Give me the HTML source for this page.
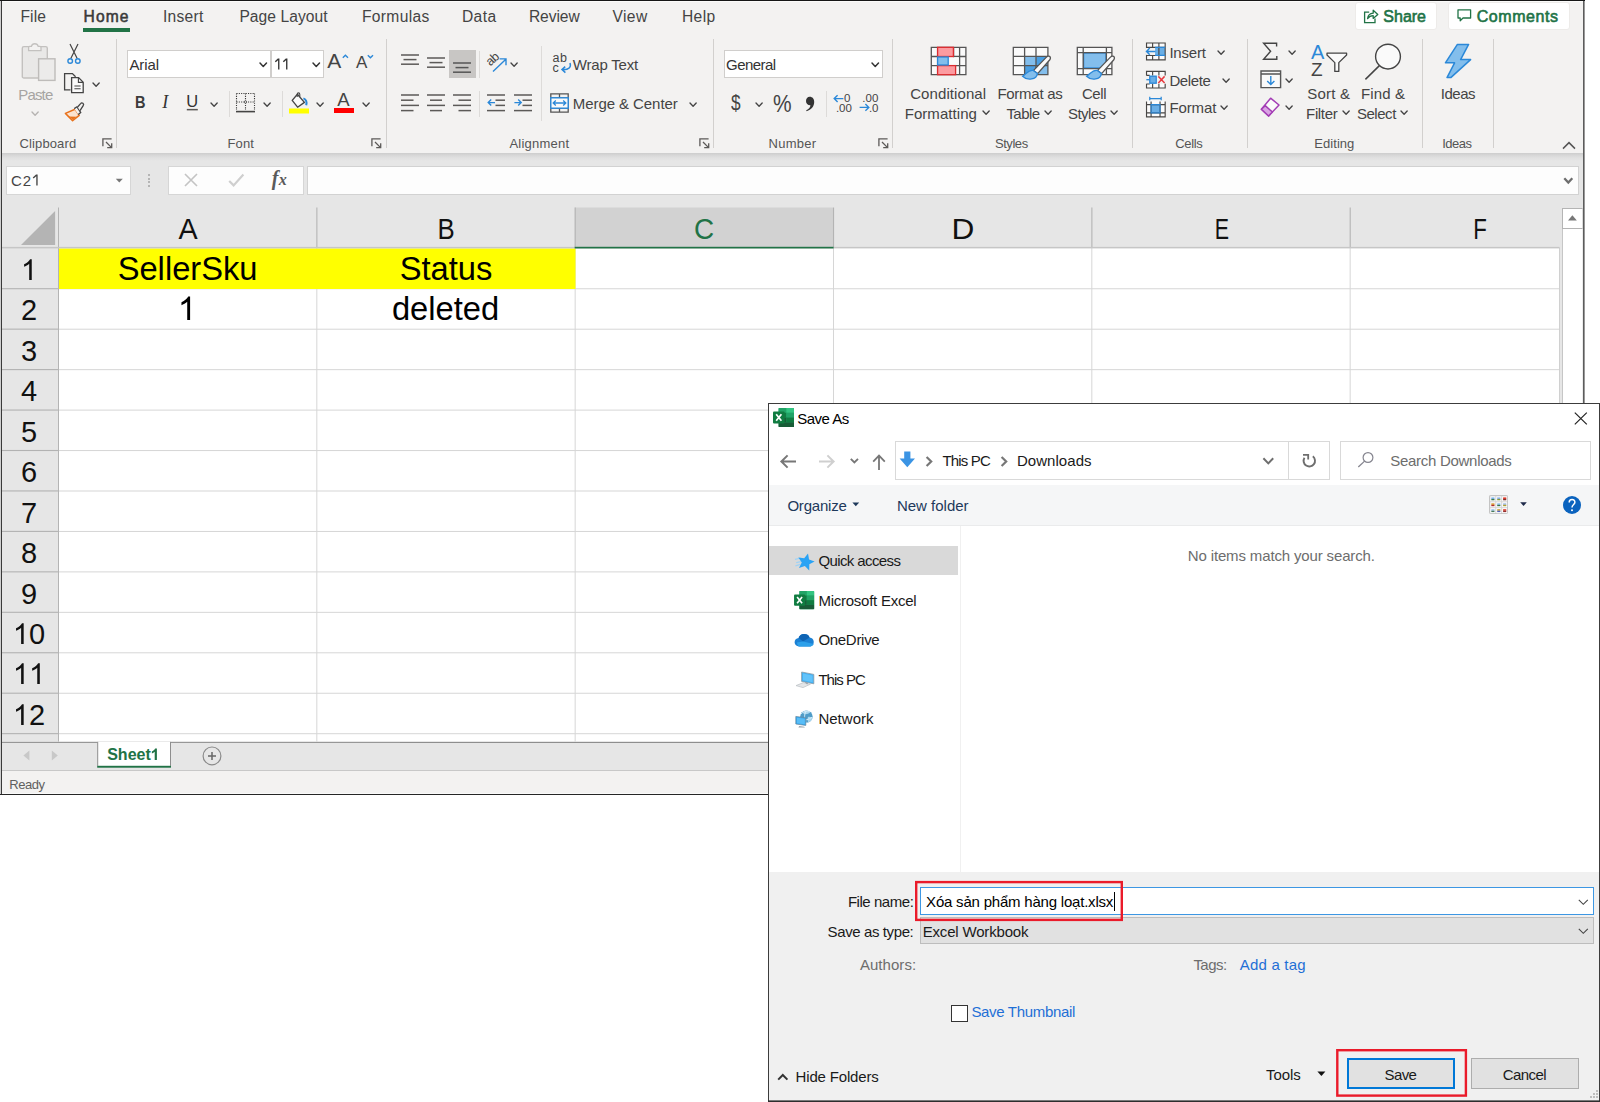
<!DOCTYPE html>
<html><head><meta charset="utf-8"><title>Save As</title>
<style>
html,body{margin:0;padding:0;}
body{width:1600px;height:1102px;position:relative;overflow:hidden;background:#fff;font-family:"Liberation Sans", sans-serif;}
div,svg{position:absolute;box-sizing:border-box;}
svg{overflow:visible;}
.t{white-space:pre;}
</style></head><body>
<div style="left:0px;top:0px;width:1585px;height:795px;background:#fff;"></div>
<div style="left:2px;top:1px;width:1581px;height:152px;background:#f3f2f1;"></div>
<div style="left:2px;top:153px;width:1581px;height:589px;background:#e6e6e6;"></div>
<div style="left:2px;top:153px;width:1581px;height:8px;background:linear-gradient(#cdcdcd,#d6d6d6 25%,#e0e0e0 60%,#e6e6e6);"></div>
<div style="left:2px;top:742px;width:1581px;height:28px;background:#e6e6e6;"></div>
<div style="left:2px;top:771px;width:1581px;height:22px;background:#f3f2f1;"></div>
<div style="left:2px;top:770px;width:1581px;height:1px;background:#c8c8c8;"></div>
<div id="t1" class="t" style="left:20.38px;top:8px;font-size:15.6px;line-height:17px;color:#444;font-weight:400;white-space:pre;letter-spacing:0.152px;">File</div>
<div id="t2" class="t" style="left:83.58px;top:8px;font-size:15.6px;line-height:17px;color:#3a3a3a;font-weight:400;white-space:pre;letter-spacing:1.110px;-webkit-text-stroke:0.55px #3a3a3a;">Home</div>
<div id="t3" class="t" style="left:162.88px;top:8px;font-size:15.6px;line-height:17px;color:#444;font-weight:400;white-space:pre;letter-spacing:0.291px;">Insert</div>
<div id="t4" class="t" style="left:239.38px;top:8px;font-size:15.6px;line-height:17px;color:#444;font-weight:400;white-space:pre;letter-spacing:0.061px;">Page Layout</div>
<div id="t5" class="t" style="left:361.88px;top:8px;font-size:15.6px;line-height:17px;color:#444;font-weight:400;white-space:pre;letter-spacing:0.344px;">Formulas</div>
<div id="t6" class="t" style="left:461.88px;top:8px;font-size:15.6px;line-height:17px;color:#444;font-weight:400;white-space:pre;letter-spacing:0.449px;">Data</div>
<div id="t7" class="t" style="left:528.88px;top:8px;font-size:15.6px;line-height:17px;color:#444;font-weight:400;white-space:pre;letter-spacing:-0.065px;">Review</div>
<div id="t8" class="t" style="left:612.38px;top:8px;font-size:15.6px;line-height:17px;color:#444;font-weight:400;white-space:pre;letter-spacing:0.429px;">View</div>
<div id="t9" class="t" style="left:681.88px;top:8px;font-size:15.6px;line-height:17px;color:#444;font-weight:400;white-space:pre;letter-spacing:0.417px;">Help</div>
<div style="left:83px;top:28px;width:47px;height:4px;background:#217346;"></div>
<div style="left:1355px;top:2px;width:82px;height:28px;background:#fff;border:1px solid #edebe9;border-radius:3px;"></div>
<div style="left:1448px;top:2px;width:122px;height:28px;background:#fff;border:1px solid #edebe9;border-radius:3px;"></div>
<div id="t10" class="t" style="left:1383.36px;top:8px;font-size:16px;line-height:17px;color:#217346;font-weight:400;white-space:pre;letter-spacing:-0.025px;-webkit-text-stroke:0.6px #217346;">Share</div>
<div id="t11" class="t" style="left:1476.66px;top:8px;font-size:16px;line-height:17px;color:#217346;font-weight:400;white-space:pre;letter-spacing:0.578px;-webkit-text-stroke:0.6px #217346;">Comments</div>
<svg style="left:1363px;top:8px;" width="16" height="16" viewBox="0 0 16 16"><path d="M6.2 4.2 H1.6 V14.6 H12 V10.6" fill="none" stroke="#217346" stroke-width="1.3"/><path d="M4.6 10.6 C5 7.2 7.4 5.4 10.2 5.2 V2.2 L14.8 6.4 L10.2 10.4 V7.6 C8 7.6 6 8.6 4.6 10.6 Z" fill="none" stroke="#217346" stroke-width="1.3" stroke-linejoin="round"/></svg>
<svg style="left:1457px;top:9px;" width="15" height="13" viewBox="0 0 15 13"><path d="M1 0.8 H13.6 V9 H6 L3.2 11.8 V9 H1 Z" fill="none" stroke="#217346" stroke-width="1.3" stroke-linejoin="round"/></svg>
<div style="left:6px;top:166px;width:125px;height:29px;background:#fdfdfd;border:1px solid #d6d6d6;"></div>
<div id="t12" class="t" style="left:10.90px;top:172px;font-size:15px;line-height:17px;color:#444;font-weight:400;white-space:pre;letter-spacing:1.006px;">C2</div>
<svg style="left:32.4px;top:174.4px;" width="7" height="13" viewBox="0 0 7 13"><path d="M1.2 4 L4.3 1.2 H4.95 V11.6" fill="none" stroke="#444" stroke-width="1.35"/></svg>
<svg style="left:115px;top:178px;" width="9" height="6" viewBox="0 0 9 6"><path d="M0.8 0.8 H7.8 L4.3 4.6 Z" fill="#777"/></svg>
<div style="left:148px;top:174.0px;width:2px;height:2px;background:#b5b5b5;"></div>
<div style="left:148px;top:177.6px;width:2px;height:2px;background:#b5b5b5;"></div>
<div style="left:148px;top:181.2px;width:2px;height:2px;background:#b5b5b5;"></div>
<div style="left:148px;top:184.8px;width:2px;height:2px;background:#b5b5b5;"></div>
<div style="left:168px;top:166px;width:136px;height:29px;background:#fdfdfd;border:1px solid #d6d6d6;"></div>
<svg style="left:184px;top:173px;" width="14" height="14" viewBox="0 0 14 14"><path d="M1 1 L13 13 M13 1 L1 13" stroke="#c4c4c4" stroke-width="1.6" fill="none"/></svg>
<svg style="left:228px;top:173px;" width="17" height="14" viewBox="0 0 17 14"><path d="M1.2 8 L5.6 12.4 L15.4 1.6" stroke="#cfcfcf" stroke-width="2.2" fill="none"/></svg>
<div id="t13" class="t" style="left:271.70px;top:167px;font-size:20px;line-height:22px;color:#5a5a5a;font-weight:700;white-space:pre;font-style:italic;font-family:'Liberation Serif', serif;">f</div>
<div id="t14" class="t" style="left:278.86px;top:171px;font-size:16px;line-height:17px;color:#5a5a5a;font-weight:700;white-space:pre;font-style:italic;font-family:'Liberation Serif', serif;">x</div>
<div style="left:307px;top:166px;width:1272px;height:29px;background:#fdfdfd;border:1px solid #d2d2d2;"></div>
<svg style="left:1563px;top:177.4px;" width="11" height="8" viewBox="0 0 11 8"><path d="M1.3 1.3 L5.3 5.5 L9.3 1.3" stroke="#6e6e6e" stroke-width="2.3" fill="none"/></svg>
<svg style="left:0px;top:0px;" width="1600" height="800" viewBox="0 0 1600 800"><rect x="59" y="248" width="1500.6" height="493.5" fill="#fff"/><rect x="574.66" y="207.5" width="258.33" height="40" fill="#d2d2d2"/><rect x="316.33" y="248" width="1" height="493.5" fill="#d6d6d6"/><rect x="574.66" y="248" width="1" height="493.5" fill="#d6d6d6"/><rect x="832.99" y="248" width="1" height="493.5" fill="#d6d6d6"/><rect x="1091.32" y="248" width="1" height="493.5" fill="#d6d6d6"/><rect x="1349.65" y="248" width="1" height="493.5" fill="#d6d6d6"/><rect x="59" y="288.25" width="1500.6" height="1" fill="#d6d6d6"/><rect x="59" y="328.70" width="1500.6" height="1" fill="#d6d6d6"/><rect x="59" y="369.15" width="1500.6" height="1" fill="#d6d6d6"/><rect x="59" y="409.60" width="1500.6" height="1" fill="#d6d6d6"/><rect x="59" y="450.05" width="1500.6" height="1" fill="#d6d6d6"/><rect x="59" y="490.50" width="1500.6" height="1" fill="#d6d6d6"/><rect x="59" y="530.95" width="1500.6" height="1" fill="#d6d6d6"/><rect x="59" y="571.40" width="1500.6" height="1" fill="#d6d6d6"/><rect x="59" y="611.85" width="1500.6" height="1" fill="#d6d6d6"/><rect x="59" y="652.30" width="1500.6" height="1" fill="#d6d6d6"/><rect x="59" y="692.75" width="1500.6" height="1" fill="#d6d6d6"/><rect x="59" y="733.20" width="1500.6" height="1" fill="#d6d6d6"/><rect x="1559.00" y="248" width="1" height="493.5" fill="#d0d0d0"/><rect x="59" y="248.4" width="516.5" height="40.6" fill="#ffff00"/><rect x="316.33" y="207.5" width="1.1" height="40" fill="#b4b4b4"/><rect x="574.66" y="207.5" width="1.1" height="40" fill="#b4b4b4"/><rect x="832.99" y="207.5" width="1.1" height="40" fill="#b4b4b4"/><rect x="1091.32" y="207.5" width="1.1" height="40" fill="#b4b4b4"/><rect x="1349.65" y="207.5" width="1.1" height="40" fill="#b4b4b4"/><rect x="58" y="207.5" width="1" height="534.0" fill="#b4b4b4"/><rect x="2" y="288.15" width="56" height="1.1" fill="#b2b2b2"/><rect x="2" y="328.60" width="56" height="1.1" fill="#b2b2b2"/><rect x="2" y="369.05" width="56" height="1.1" fill="#b2b2b2"/><rect x="2" y="409.50" width="56" height="1.1" fill="#b2b2b2"/><rect x="2" y="449.95" width="56" height="1.1" fill="#b2b2b2"/><rect x="2" y="490.40" width="56" height="1.1" fill="#b2b2b2"/><rect x="2" y="530.85" width="56" height="1.1" fill="#b2b2b2"/><rect x="2" y="571.30" width="56" height="1.1" fill="#b2b2b2"/><rect x="2" y="611.75" width="56" height="1.1" fill="#b2b2b2"/><rect x="2" y="652.20" width="56" height="1.1" fill="#b2b2b2"/><rect x="2" y="692.65" width="56" height="1.1" fill="#b2b2b2"/><rect x="2" y="733.10" width="56" height="1.1" fill="#b2b2b2"/><rect x="2" y="246.9" width="1557.6" height="1.5" fill="#c6c6c6"/><rect x="574.66" y="246.8" width="258.93" height="1.65" fill="#217346"/><path d="M55.1 210.9 V244.9 H21 Z" fill="#b4b4b4"/></svg>
<div class="t" style="left:128.00px;top:212px;width:120px;text-align:center;font-size:29.3px;line-height:33px;color:#111;font-weight:400;transform:scaleX(0.98);transform-origin:50% 50%;">A</div>
<div class="t" style="left:385.90px;top:212px;width:120px;text-align:center;font-size:29.3px;line-height:33px;color:#111;font-weight:400;transform:scaleX(0.88);transform-origin:50% 50%;">B</div>
<div class="t" style="left:644.40px;top:212px;width:120px;text-align:center;font-size:29.3px;line-height:33px;color:#217346;font-weight:400;transform:scaleX(0.95);transform-origin:50% 50%;">C</div>
<div class="t" style="left:903.10px;top:212px;width:120px;text-align:center;font-size:29.3px;line-height:33px;color:#111;font-weight:400;transform:scaleX(1.08);transform-origin:50% 50%;">D</div>
<div class="t" style="left:1161.80px;top:212px;width:120px;text-align:center;font-size:29.3px;line-height:33px;color:#111;font-weight:400;transform:scaleX(0.73);transform-origin:50% 50%;">E</div>
<div class="t" style="left:1420.20px;top:212px;width:120px;text-align:center;font-size:29.3px;line-height:33px;color:#111;font-weight:400;transform:scaleX(0.76);transform-origin:50% 50%;">F</div>
<svg style="left:0px;top:0px;" width="1600" height="1102" viewBox="0 0 1600 1102"><path transform="translate(20.94 280) scale(0.01416 -0.01416)" d="M763 0H583V1147Q518 1085 412.5 1023Q307 961 223 930V1104Q374 1175 487 1276Q600 1377 647 1472H763Z" fill="#111"/></svg>
<div class="t" style="left:20.94px;top:294px;font-size:29px;line-height:32px;color:#111;">2</div>
<div class="t" style="left:20.94px;top:335px;font-size:29px;line-height:32px;color:#111;">3</div>
<div class="t" style="left:20.94px;top:375px;font-size:29px;line-height:32px;color:#111;">4</div>
<div class="t" style="left:20.94px;top:416px;font-size:29px;line-height:32px;color:#111;">5</div>
<div class="t" style="left:20.94px;top:456px;font-size:29px;line-height:32px;color:#111;">6</div>
<div class="t" style="left:20.94px;top:497px;font-size:29px;line-height:32px;color:#111;">7</div>
<div class="t" style="left:20.94px;top:537px;font-size:29px;line-height:32px;color:#111;">8</div>
<div class="t" style="left:20.94px;top:578px;font-size:29px;line-height:32px;color:#111;">9</div>
<svg style="left:0px;top:0px;" width="1600" height="1102" viewBox="0 0 1600 1102"><path transform="translate(12.87 644) scale(0.01416 -0.01416)" d="M763 0H583V1147Q518 1085 412.5 1023Q307 961 223 930V1104Q374 1175 487 1276Q600 1377 647 1472H763Z" fill="#111"/></svg>
<div class="t" style="left:29.00px;top:618px;font-size:29px;line-height:32px;color:#111;">0</div>
<svg style="left:0px;top:0px;" width="1600" height="1102" viewBox="0 0 1600 1102"><path transform="translate(12.87 684) scale(0.01416 -0.01416)" d="M763 0H583V1147Q518 1085 412.5 1023Q307 961 223 930V1104Q374 1175 487 1276Q600 1377 647 1472H763Z" fill="#111"/></svg>
<svg style="left:0px;top:0px;" width="1600" height="1102" viewBox="0 0 1600 1102"><path transform="translate(29.00 684) scale(0.01416 -0.01416)" d="M763 0H583V1147Q518 1085 412.5 1023Q307 961 223 930V1104Q374 1175 487 1276Q600 1377 647 1472H763Z" fill="#111"/></svg>
<svg style="left:0px;top:0px;" width="1600" height="1102" viewBox="0 0 1600 1102"><path transform="translate(12.87 725) scale(0.01416 -0.01416)" d="M763 0H583V1147Q518 1085 412.5 1023Q307 961 223 930V1104Q374 1175 487 1276Q600 1377 647 1472H763Z" fill="#111"/></svg>
<div class="t" style="left:29.00px;top:699px;font-size:29px;line-height:32px;color:#111;">2</div>
<div class="t" style="left:58.60px;top:250px;width:258px;text-align:center;font-size:32.7px;line-height:37px;color:#000;font-weight:400;">SellerSku</div>
<div class="t" style="left:317.00px;top:250px;width:258px;text-align:center;font-size:32.7px;line-height:37px;color:#000;font-weight:400;">Status</div>
<svg style="left:0px;top:0px;" width="1600" height="1102" viewBox="0 0 1600 1102"><path transform="translate(177.91 320) scale(0.01597 -0.01597)" d="M763 0H583V1147Q518 1085 412.5 1023Q307 961 223 930V1104Q374 1175 487 1276Q600 1377 647 1472H763Z" fill="#000"/></svg>
<div class="t" style="left:316.50px;top:290px;width:258px;text-align:center;font-size:32.7px;line-height:37px;color:#000;font-weight:400;">deleted</div>
<div style="left:1562px;top:208px;width:21px;height:534px;background:#fff;border-left:1px solid #c6c6c6;border-right:1px solid #ececec;"></div>
<div style="left:1562px;top:208px;width:21px;height:21px;background:#fff;border:1px solid #b4b4b4;border-right-color:#dcdcdc;"></div>
<svg style="left:1568px;top:215px;" width="9" height="6" viewBox="0 0 9 6"><path d="M0 5.4 L4.4 0.3 L8.8 5.4 Z" fill="#777"/></svg>
<svg style="left:0px;top:735px;" width="400" height="40" viewBox="0 0 400 40"><rect x="2" y="6.9" width="1581" height="1" fill="#8e8e8e"/><rect x="97.6" y="6.9" width="73.2" height="24" fill="#fff"/><rect x="97.2" y="6.9" width="1" height="24" fill="#8e8e8e"/><rect x="170" y="6.9" width="1" height="24" fill="#8e8e8e"/><rect x="97.2" y="30.8" width="73.8" height="1.9" fill="#217346"/><path d="M29.4 15.4 V25.6 L23.4 20.5 Z" fill="#c8c8c8"/><path d="M51.8 15.4 V25.6 L57.8 20.5 Z" fill="#c8c8c8"/><circle cx="212" cy="20.9" r="8.9" fill="none" stroke="#8a8a8a" stroke-width="1.2"/><path d="M212 16.9 V24.9 M208 20.9 H216" stroke="#666" stroke-width="1.5"/></svg>
<div style="left:400px;top:742px;width:1183px;height:1px;background:#8e8e8e;"></div>
<div id="t15" class="t" style="left:107.16px;top:746px;font-size:16px;line-height:17px;color:#217346;font-weight:700;white-space:pre;letter-spacing:0.020px;">Sheet</div>
<svg style="left:0px;top:0px;" width="1600" height="1102" viewBox="0 0 1600 1102"><path transform="translate(150.60 760) scale(0.00781 -0.00781)" d="M806 0H525V1059Q371 915 162 846V1101Q272 1137 401 1237.5Q530 1338 578 1472H806Z" fill="#217346"/></svg>
<div id="t16" class="t" style="left:9.23px;top:777px;font-size:13px;line-height:15px;color:#606060;font-weight:400;white-space:pre;letter-spacing:-0.418px;">Ready</div>
<div style="left:0px;top:0px;width:1px;height:795px;background:#cfcfcf;"></div>
<div style="left:1px;top:0px;width:1px;height:795px;background:#3a3a3a;"></div>
<div style="left:2px;top:1px;width:1581px;height:1px;background:#fbfbfa;"></div>
<div style="left:0px;top:0px;width:1585px;height:1px;background:#161616;"></div>
<div style="left:1583px;top:1px;width:1px;height:794px;background:#5c5c5c;"></div>
<div style="left:1584px;top:1px;width:1px;height:794px;background:#9a9a9a;"></div>
<div style="left:2px;top:793px;width:1581px;height:1px;background:#fafafa;"></div>
<div style="left:0px;top:794px;width:1585px;height:1px;background:#262626;"></div>
<div style="left:116px;top:39px;width:1px;height:109px;background:#d2d0ce;"></div>
<div style="left:386px;top:39px;width:1px;height:109px;background:#d2d0ce;"></div>
<div style="left:713px;top:39px;width:1px;height:109px;background:#d2d0ce;"></div>
<div style="left:892px;top:39px;width:1px;height:109px;background:#d2d0ce;"></div>
<div style="left:1132px;top:39px;width:1px;height:109px;background:#d2d0ce;"></div>
<div style="left:1247px;top:39px;width:1px;height:109px;background:#d2d0ce;"></div>
<div style="left:1422px;top:39px;width:1px;height:109px;background:#d2d0ce;"></div>
<div style="left:1493px;top:39px;width:1px;height:109px;background:#d2d0ce;"></div>
<div style="left:229px;top:91px;width:1px;height:26px;background:#dddbd9;"></div>
<div style="left:282px;top:91px;width:1px;height:26px;background:#dddbd9;"></div>
<div style="left:479px;top:51px;width:1px;height:27px;background:#dddbd9;"></div>
<div style="left:479px;top:91px;width:1px;height:26px;background:#dddbd9;"></div>
<div style="left:541px;top:46px;width:1px;height:75px;background:#dddbd9;"></div>
<div style="left:826px;top:91px;width:1px;height:26px;background:#dddbd9;"></div>
<div id="t17" class="t" style="left:19.48px;top:136px;font-size:13px;line-height:15px;color:#555;font-weight:400;white-space:pre;letter-spacing:0.132px;">Clipboard</div>
<div id="t18" class="t" style="left:227.48px;top:136px;font-size:13px;line-height:15px;color:#555;font-weight:400;white-space:pre;letter-spacing:0.156px;">Font</div>
<div id="t19" class="t" style="left:509.48px;top:136px;font-size:13px;line-height:15px;color:#555;font-weight:400;white-space:pre;letter-spacing:0.225px;">Alignment</div>
<div id="t20" class="t" style="left:768.48px;top:136px;font-size:13px;line-height:15px;color:#555;font-weight:400;white-space:pre;letter-spacing:0.282px;">Number</div>
<div id="t21" class="t" style="left:994.98px;top:136px;font-size:13px;line-height:15px;color:#555;font-weight:400;white-space:pre;letter-spacing:-0.444px;">Styles</div>
<div id="t22" class="t" style="left:1175.28px;top:136px;font-size:13px;line-height:15px;color:#555;font-weight:400;white-space:pre;letter-spacing:-0.333px;">Cells</div>
<div id="t23" class="t" style="left:1314.28px;top:136px;font-size:13px;line-height:15px;color:#555;font-weight:400;white-space:pre;letter-spacing:0.056px;">Editing</div>
<div id="t24" class="t" style="left:1442.18px;top:136px;font-size:13px;line-height:15px;color:#555;font-weight:400;white-space:pre;letter-spacing:-0.495px;">Ideas</div>
<svg style="left:102px;top:137.5px;" width="11" height="11" viewBox="0 0 11 11"><path d="M0.9 8.2 V0.9 H9.6" fill="none" stroke="#5c5a58" stroke-width="1.3"/><path d="M4 4 L9.6 9.6 M9.7 5.2 V9.7 H5.2" fill="none" stroke="#5c5a58" stroke-width="1.3"/></svg>
<svg style="left:371px;top:137.5px;" width="11" height="11" viewBox="0 0 11 11"><path d="M0.9 8.2 V0.9 H9.6" fill="none" stroke="#5c5a58" stroke-width="1.3"/><path d="M4 4 L9.6 9.6 M9.7 5.2 V9.7 H5.2" fill="none" stroke="#5c5a58" stroke-width="1.3"/></svg>
<svg style="left:699px;top:137.5px;" width="11" height="11" viewBox="0 0 11 11"><path d="M0.9 8.2 V0.9 H9.6" fill="none" stroke="#5c5a58" stroke-width="1.3"/><path d="M4 4 L9.6 9.6 M9.7 5.2 V9.7 H5.2" fill="none" stroke="#5c5a58" stroke-width="1.3"/></svg>
<svg style="left:877.5px;top:137.5px;" width="11" height="11" viewBox="0 0 11 11"><path d="M0.9 8.2 V0.9 H9.6" fill="none" stroke="#5c5a58" stroke-width="1.3"/><path d="M4 4 L9.6 9.6 M9.7 5.2 V9.7 H5.2" fill="none" stroke="#5c5a58" stroke-width="1.3"/></svg>
<svg style="left:1562px;top:140.7px;" width="14" height="9" viewBox="0 0 14 9"><path d="M1 7.6 L7 1.6 L13 7.6" fill="none" stroke="#555" stroke-width="1.5"/></svg>
<svg style="left:21px;top:43px;" width="36" height="39" viewBox="0 0 36 39"><rect x="1.3" y="3.6" width="25" height="31.4" rx="1.6" fill="#e9e8e7" stroke="#c3c1bf" stroke-width="1.4"/><path d="M7.6 7.6 V4.4 a1 1 0 0 1 1 -1 h1.8 a3.5 3.5 0 0 1 6.8 0 h1.8 a1 1 0 0 1 1 1 V7.6 Z" fill="#f3f2f1" stroke="#c3c1bf" stroke-width="1.3"/><rect x="17.6" y="15.8" width="16.4" height="21.6" fill="#ecebea" stroke="#bebcba" stroke-width="1.4"/></svg>
<div id="t25" class="t" style="left:18.30px;top:86px;font-size:15px;line-height:17px;color:#a6a4a2;font-weight:400;white-space:pre;letter-spacing:-0.852px;">Paste</div>
<svg style="left:30.7px;top:110.9px;" width="8.2" height="5.2" viewBox="0 0 8.2 5.2"><path d="M1 1 L4.1 4.2 L7.2 1" fill="none" stroke="#b5b3b1" stroke-width="1.35" stroke-linecap="round" stroke-linejoin="round"/></svg>
<svg style="left:66px;top:43px;" width="16" height="22" viewBox="0 0 16 22"><path d="M4 1 L11.2 15.6 M12 1 L4.8 15.6" stroke="#444" stroke-width="1.2" fill="none"/><circle cx="4.2" cy="18" r="2.3" fill="none" stroke="#2b88d8" stroke-width="1.4"/><circle cx="11.8" cy="18" r="2.3" fill="none" stroke="#2b88d8" stroke-width="1.4"/></svg>
<svg style="left:63px;top:72px;" width="22" height="22" viewBox="0 0 22 22"><path d="M7.5 17.8 H1.6 V1.6 H9.4 L12.6 4.8" fill="none" stroke="#444" stroke-width="1.3"/><path d="M8.6 5.6 H15.6 L20.2 10.2 V20.6 H8.6 Z" fill="#fafafa" stroke="#444" stroke-width="1.3"/><path d="M15.4 5.8 V10.4 H20" fill="none" stroke="#444" stroke-width="1.1"/><path d="M11.4 14 H17.6 M11.4 16.8 H17.6" stroke="#444" stroke-width="1.1"/></svg>
<svg style="left:91.9px;top:81.9px;" width="8.2" height="5.2" viewBox="0 0 8.2 5.2"><path d="M1 1 L4.1 4.2 L7.2 1" fill="none" stroke="#444" stroke-width="1.35" stroke-linecap="round" stroke-linejoin="round"/></svg>
<svg style="left:64px;top:102px;" width="22" height="20" viewBox="0 0 22 20"><path d="M1.4 11.4 L11 7.2 L15.2 13.4 L8.6 18.6 Z" fill="#fbe3cf" stroke="#e8721c" stroke-width="1.5" stroke-linejoin="round"/><path d="M4.8 14.6 L9 17.6 L12.6 14.8" fill="#e8721c" stroke="none"/><path d="M10.2 6.6 L13 4.8 L16.8 10.6 L14.2 12.6" fill="#f3f2f1" stroke="#444" stroke-width="1.3" stroke-linejoin="round"/><path d="M13.6 5 L16.6 1.6 a1.6 1.6 0 0 1 2.6 2 L16 8.6" fill="#f3f2f1" stroke="#444" stroke-width="1.3" stroke-linejoin="round"/></svg>
<div style="left:127px;top:50px;width:144px;height:28px;background:#fff;border:1px solid #d0cecc;"></div>
<div style="left:271px;top:50px;width:53px;height:28px;background:#fff;border:1px solid #d0cecc;"></div>
<div id="t26" class="t" style="left:129.40px;top:56px;font-size:15px;line-height:17px;color:#333;font-weight:400;white-space:pre;letter-spacing:-0.103px;">Arial</div>
<svg style="left:273.6px;top:58.4px;" width="7" height="12.6" viewBox="0 0 7 12.6"><path d="M1.3 3.86 L4.1 1.2 H4.75 V11.6" fill="none" stroke="#333" stroke-width="1.35"/></svg>
<svg style="left:281.6px;top:58.4px;" width="7" height="12.6" viewBox="0 0 7 12.6"><path d="M1.3 3.86 L4.1 1.2 H4.75 V11.6" fill="none" stroke="#333" stroke-width="1.35"/></svg>
<svg style="left:259.25px;top:62.3px;" width="8.5" height="5.4" viewBox="0 0 8.5 5.4"><path d="M1 1 L4.25 4.4 L7.5 1" fill="none" stroke="#333" stroke-width="1.5" stroke-linecap="round" stroke-linejoin="round"/></svg>
<svg style="left:312.35px;top:62.3px;" width="8.5" height="5.4" viewBox="0 0 8.5 5.4"><path d="M1 1 L4.25 4.4 L7.5 1" fill="none" stroke="#333" stroke-width="1.5" stroke-linecap="round" stroke-linejoin="round"/></svg>
<div id="t27" class="t" style="left:327.16px;top:49px;font-size:21px;line-height:23px;color:#444;font-weight:400;white-space:pre;letter-spacing:1.264px;">A</div>
<svg style="left:342px;top:54px;" width="7" height="5" viewBox="0 0 7 5"><path d="M0.8 3.8 L3.4 1.2 L6 3.8" fill="none" stroke="#2b88d8" stroke-width="1.4"/></svg>
<div id="t28" class="t" style="left:356.02px;top:53px;font-size:17px;line-height:19px;color:#444;font-weight:400;white-space:pre;letter-spacing:0.816px;">A</div>
<svg style="left:367px;top:54px;" width="7" height="5" viewBox="0 0 7 5"><path d="M0.8 1.2 L3.4 3.8 L6 1.2" fill="none" stroke="#2b88d8" stroke-width="1.4"/></svg>
<div id="t29" class="t" style="left:135.24px;top:93px;font-size:16.5px;line-height:18px;color:#3b3b3b;font-weight:700;white-space:pre;transform:scaleX(0.88);transform-origin:0 50%;">B</div>
<div id="t30" class="t" style="left:162.28px;top:92px;font-size:18px;line-height:20px;color:#333;font-weight:400;white-space:pre;letter-spacing:2.440px;font-style:italic;font-family:'Liberation Serif', serif;">I</div>
<div id="t31" class="t" style="left:186.34px;top:92px;font-size:16.5px;line-height:18px;color:#333;font-weight:400;white-space:pre;letter-spacing:-0.102px;">U</div>
<svg style="left:186px;top:108px;" width="14" height="4" viewBox="0 0 14 4"><rect x="0.8" y="0.9" width="11" height="1.5" fill="#5a5856"/></svg>
<svg style="left:210.3px;top:101.9px;" width="8.2" height="5.2" viewBox="0 0 8.2 5.2"><path d="M1 1 L4.1 4.2 L7.2 1" fill="none" stroke="#444" stroke-width="1.35" stroke-linecap="round" stroke-linejoin="round"/></svg>
<svg style="left:235px;top:92px;" width="21" height="21" viewBox="0 0 21 21"><path d="M1.5 1.5 H19.5 M1.5 1.5 V18 M19.5 1.5 V18 M10.5 1.5 V18 M1.5 10 H19.5" stroke="#3a3a3a" stroke-width="1.1" stroke-dasharray="1.1 1.2" fill="none"/><circle cx="10.5" cy="10" r="1.2" fill="#f3f2f1" stroke="#3a3a3a" stroke-width="0.7"/><path d="M1 19.6 H20" stroke="#444" stroke-width="1.6"/></svg>
<svg style="left:263.3px;top:101.9px;" width="8.2" height="5.2" viewBox="0 0 8.2 5.2"><path d="M1 1 L4.1 4.2 L7.2 1" fill="none" stroke="#444" stroke-width="1.35" stroke-linecap="round" stroke-linejoin="round"/></svg>
<svg style="left:288px;top:91.5px;" width="22" height="22" viewBox="0 0 22 22"><path d="M9.4 2.2 L16.4 10.4 L9.6 15.2 L4.2 8.4 Z" fill="#fafafa" stroke="#444" stroke-width="1.35" stroke-linejoin="round"/><path d="M9.2 5 V2.4 C9.2 0.4 11.8 0.4 11.8 2.4 V4.8" fill="none" stroke="#444" stroke-width="1.1"/><path d="M15.4 6.4 C18.2 7.4 19 10 18.2 13.2" fill="none" stroke="#2b88d8" stroke-width="2"/><rect x="1" y="16.5" width="20" height="5" fill="#ffff00"/></svg>
<svg style="left:316.2px;top:101.9px;" width="8.2" height="5.2" viewBox="0 0 8.2 5.2"><path d="M1 1 L4.1 4.2 L7.2 1" fill="none" stroke="#444" stroke-width="1.35" stroke-linecap="round" stroke-linejoin="round"/></svg>
<div id="t32" class="t" style="left:337.26px;top:89px;font-size:18.5px;line-height:21px;color:#444;font-weight:400;white-space:pre;letter-spacing:1.636px;">A</div>
<div style="left:334px;top:108px;width:20.3px;height:5px;background:#ff0000;"></div>
<svg style="left:361.6px;top:101.9px;" width="8.2" height="5.2" viewBox="0 0 8.2 5.2"><path d="M1 1 L4.1 4.2 L7.2 1" fill="none" stroke="#444" stroke-width="1.35" stroke-linecap="round" stroke-linejoin="round"/></svg>
<svg style="left:400.5px;top:53.8px;" width="20" height="12.2" viewBox="0 0 20 12.2"><rect x="0.00" y="0.25" width="18.00" height="1.5" fill="#5c5a58"/><rect x="2.50" y="4.85" width="13.00" height="1.5" fill="#5c5a58"/><rect x="0.00" y="9.45" width="18.00" height="1.5" fill="#5c5a58"/></svg>
<svg style="left:427px;top:57.2px;" width="20" height="12.2" viewBox="0 0 20 12.2"><rect x="0.00" y="0.25" width="18.00" height="1.5" fill="#5c5a58"/><rect x="2.50" y="4.85" width="13.00" height="1.5" fill="#5c5a58"/><rect x="0.00" y="9.45" width="18.00" height="1.5" fill="#5c5a58"/></svg>
<div style="left:449px;top:50px;width:27px;height:28px;background:#c8c6c4;"></div>
<svg style="left:453.3px;top:62.2px;" width="20" height="12.2" viewBox="0 0 20 12.2"><rect x="0.00" y="0.25" width="18.00" height="1.5" fill="#555"/><rect x="2.50" y="4.85" width="13.00" height="1.5" fill="#555"/><rect x="0.00" y="9.45" width="18.00" height="1.5" fill="#555"/></svg>
<svg style="left:400.5px;top:93.8px;" width="20" height="18.6" viewBox="0 0 20 18.6"><rect x="0.00" y="0.25" width="18.00" height="1.5" fill="#5c5a58"/><rect x="0.00" y="5.45" width="12.50" height="1.5" fill="#5c5a58"/><rect x="0.00" y="10.65" width="18.00" height="1.5" fill="#5c5a58"/><rect x="0.00" y="15.85" width="12.50" height="1.5" fill="#5c5a58"/></svg>
<svg style="left:427px;top:93.8px;" width="20" height="18.6" viewBox="0 0 20 18.6"><rect x="0.00" y="0.25" width="18.00" height="1.5" fill="#5c5a58"/><rect x="3.00" y="5.45" width="12.00" height="1.5" fill="#5c5a58"/><rect x="0.00" y="10.65" width="18.00" height="1.5" fill="#5c5a58"/><rect x="3.00" y="15.85" width="12.00" height="1.5" fill="#5c5a58"/></svg>
<svg style="left:453.3px;top:93.8px;" width="20" height="18.6" viewBox="0 0 20 18.6"><rect x="0.00" y="0.25" width="18.00" height="1.5" fill="#5c5a58"/><rect x="5.50" y="5.45" width="12.50" height="1.5" fill="#5c5a58"/><rect x="0.00" y="10.65" width="18.00" height="1.5" fill="#5c5a58"/><rect x="5.50" y="15.85" width="12.50" height="1.5" fill="#5c5a58"/></svg>
<svg style="left:485px;top:52px;" width="24" height="22" viewBox="0 0 24 22"><text x="0" y="0" font-size="12.5" fill="#444" font-family='"Liberation Sans", sans-serif' transform="translate(5.2,14.6) rotate(-42)" letter-spacing="-0.6">ab</text><path d="M8 19.6 L20.6 7.4 M14.6 6.9 H21 V13.3" fill="none" stroke="#2b88d8" stroke-width="1.4"/></svg>
<svg style="left:510.1px;top:62.4px;" width="8.2" height="5.2" viewBox="0 0 8.2 5.2"><path d="M1 1 L4.1 4.2 L7.2 1" fill="none" stroke="#444" stroke-width="1.35" stroke-linecap="round" stroke-linejoin="round"/></svg>
<svg style="left:487px;top:93.8px;" width="20" height="18.6" viewBox="0 0 20 18.6"><rect x="0.00" y="0.25" width="18.00" height="1.5" fill="#5c5a58"/><rect x="8.50" y="5.45" width="9.50" height="1.5" fill="#5c5a58"/><rect x="8.50" y="10.65" width="9.50" height="1.5" fill="#5c5a58"/><rect x="0.00" y="15.85" width="18.00" height="1.5" fill="#5c5a58"/></svg>
<svg style="left:487px;top:97.8px;" width="9" height="9" viewBox="0 0 9 9"><path d="M8 4.6 H1.4 M4.2 1.6 L1.2 4.6 L4.2 7.6" fill="none" stroke="#2b88d8" stroke-width="1.4"/></svg>
<svg style="left:513.5px;top:93.8px;" width="20" height="18.6" viewBox="0 0 20 18.6"><rect x="0.00" y="0.25" width="18.00" height="1.5" fill="#5c5a58"/><rect x="8.50" y="5.45" width="9.50" height="1.5" fill="#5c5a58"/><rect x="8.50" y="10.65" width="9.50" height="1.5" fill="#5c5a58"/><rect x="0.00" y="15.85" width="18.00" height="1.5" fill="#5c5a58"/></svg>
<svg style="left:513.5px;top:97.8px;" width="9" height="9" viewBox="0 0 9 9"><path d="M0.4 4.6 H7 M4.2 1.6 L7.2 4.6 L4.2 7.6" fill="none" stroke="#2b88d8" stroke-width="1.4"/></svg>
<div id="t33" class="t" style="left:552.50px;top:51px;font-size:12.5px;line-height:14px;color:#444;font-weight:400;white-space:pre;letter-spacing:0.547px;">ab</div>
<div id="t34" class="t" style="left:552.50px;top:61px;font-size:12.5px;line-height:14px;color:#444;font-weight:400;white-space:pre;">c</div>
<svg style="left:559.5px;top:62px;" width="12" height="12" viewBox="0 0 12 12"><path d="M10 1 C11.4 5 9 8 2.4 7.6 M5.2 4.6 L2 7.6 L5.4 10.6" fill="none" stroke="#2b88d8" stroke-width="1.5"/></svg>
<div id="t35" class="t" style="left:572.80px;top:56px;font-size:15px;line-height:17px;color:#444;font-weight:400;white-space:pre;letter-spacing:-0.209px;">Wrap Text</div>
<svg style="left:550px;top:92.5px;" width="19" height="20" viewBox="0 0 19 20"><path d="M0.8 0.8 H18.2 V19.2 H0.8 Z M0.8 4.8 H18.2 M0.8 15.2 H18.2 M9.5 0.8 V4.8 M9.5 15.2 V19.2" fill="none" stroke="#555" stroke-width="1.3"/><rect x="0.8" y="4.8" width="17.4" height="10.4" fill="#fafafa" stroke="#2b88d8" stroke-width="1.4"/><path d="M3.4 10 H15.6 M5.8 7.6 L3.2 10 L5.8 12.4 M13.2 7.6 L15.8 10 L13.2 12.4" fill="none" stroke="#2b88d8" stroke-width="1.3"/></svg>
<div id="t36" class="t" style="left:572.80px;top:95px;font-size:15px;line-height:17px;color:#444;font-weight:400;white-space:pre;letter-spacing:-0.072px;">Merge &amp; Center</div>
<svg style="left:688.5px;top:101.9px;" width="8.2" height="5.2" viewBox="0 0 8.2 5.2"><path d="M1 1 L4.1 4.2 L7.2 1" fill="none" stroke="#444" stroke-width="1.35" stroke-linecap="round" stroke-linejoin="round"/></svg>
<div style="left:724px;top:50px;width:159px;height:28px;background:#fff;border:1px solid #d0cecc;"></div>
<div id="t37" class="t" style="left:726.10px;top:56px;font-size:15px;line-height:17px;color:#333;font-weight:400;white-space:pre;letter-spacing:-0.554px;">General</div>
<svg style="left:870.75px;top:62.3px;" width="8.5" height="5.4" viewBox="0 0 8.5 5.4"><path d="M1 1 L4.25 4.4 L7.5 1" fill="none" stroke="#333" stroke-width="1.5" stroke-linecap="round" stroke-linejoin="round"/></svg>
<div id="t38" class="t" style="left:731.34px;top:91px;font-size:21.5px;line-height:24px;color:#444;font-weight:400;white-space:pre;transform:scaleX(0.8);transform-origin:0 50%;">$</div>
<svg style="left:754.7px;top:102.4px;" width="8.2" height="5.2" viewBox="0 0 8.2 5.2"><path d="M1 1 L4.1 4.2 L7.2 1" fill="none" stroke="#444" stroke-width="1.35" stroke-linecap="round" stroke-linejoin="round"/></svg>
<div id="t39" class="t" style="left:772.96px;top:91px;font-size:23.5px;line-height:26px;color:#444;font-weight:400;white-space:pre;transform:scaleX(0.89);transform-origin:0 50%;">%</div>
<svg style="left:805px;top:95.5px;" width="10" height="16" viewBox="0 0 10 16"><path d="M4.6 0.8 C7.6 0.8 9.2 3 9.2 6 C9.2 10.4 6.4 13.8 1.6 15.2 L1.2 14.2 C4 13 5.4 11.2 5.4 9.2 C2.6 9.2 1 7.6 1 5 C1 2.6 2.6 0.8 4.6 0.8 Z" fill="#333"/></svg>
<svg style="left:833px;top:92.5px;" width="20" height="21" viewBox="0 0 20 21"><path d="M10.4 5.6 H1.4 M4.6 2.2 L1.2 5.6 L4.6 9" fill="none" stroke="#2b88d8" stroke-width="1.4"/></svg>
<div id="t40" class="t" style="left:844.04px;top:92px;font-size:11.5px;line-height:12px;color:#444;font-weight:400;white-space:pre;letter-spacing:0.814px;">0</div>
<div id="t41" class="t" style="left:835.94px;top:102px;font-size:11.5px;line-height:12px;color:#444;font-weight:400;white-space:pre;letter-spacing:-0.027px;">.00</div>
<div id="t42" class="t" style="left:862.34px;top:92px;font-size:11.5px;line-height:12px;color:#444;font-weight:400;white-space:pre;letter-spacing:0.040px;">.00</div>
<svg style="left:858.5px;top:101.5px;" width="12" height="11" viewBox="0 0 12 11"><path d="M0.6 5.4 H9.8 M6.4 2 L9.8 5.4 L6.4 8.8" fill="none" stroke="#2b88d8" stroke-width="1.4"/></svg>
<div id="t43" class="t" style="left:868.94px;top:102px;font-size:11.5px;line-height:12px;color:#444;font-weight:400;white-space:pre;letter-spacing:-0.037px;">.0</div>
<svg style="left:930px;top:46px;" width="38" height="30" viewBox="0 0 38 30"><rect x="1.3" y="1.3" width="34.6" height="27.4" fill="#fafafa"/><path d="M1.3 1.3 H35.9 V28.7 H1.3 Z M1.3 10.5 H35.9 M1.3 19.6 H35.9 M7.6 1.3 V28.7 M23.6 1.3 V28.7 M29.6 1.3 V28.7" fill="none" stroke="#555" stroke-width="1.3"/><rect x="18.6" y="11.2" width="10.2" height="7.8" fill="#fafafa"/><rect x="7.6" y="1.3" width="15.8" height="9.2" fill="#fc9ba0" stroke="#dc2c30" stroke-width="1.3"/><rect x="7.6" y="19.6" width="18" height="9.1" fill="#fc9ba0" stroke="#dc2c30" stroke-width="1.3"/><rect x="7.6" y="11" width="10.6" height="8" fill="#83beec" stroke="#2b88d8" stroke-width="1.3"/></svg>
<div id="t44" class="t" style="left:910.20px;top:85px;font-size:15px;line-height:17px;color:#444;font-weight:400;white-space:pre;letter-spacing:0.085px;">Conditional</div>
<div id="t45" class="t" style="left:904.70px;top:105px;font-size:15px;line-height:17px;color:#444;font-weight:400;white-space:pre;letter-spacing:0.060px;">Formatting</div>
<svg style="left:981.5px;top:110.4px;" width="8.2" height="5.2" viewBox="0 0 8.2 5.2"><path d="M1 1 L4.1 4.2 L7.2 1" fill="none" stroke="#444" stroke-width="1.35" stroke-linecap="round" stroke-linejoin="round"/></svg>
<svg style="left:1012px;top:46px;" width="40" height="36" viewBox="0 0 40 36"><rect x="1.3" y="1.3" width="34.6" height="27.4" fill="#fafafa"/><rect x="12.6" y="10.4" width="23.3" height="18.3" fill="#4a9fe3"/><rect x="12.6" y="10.4" width="11.4" height="9.2" fill="#83beec"/><rect x="24" y="19.6" width="11.9" height="9.1" fill="#83beec"/><path d="M1.3 1.3 H35.9 V28.7 H1.3 Z M1.3 10.4 H35.9 M1.3 19.6 H35.9 M12.6 1.3 V28.7 M24 1.3 V28.7" fill="none" stroke="#555" stroke-width="1.3"/><path d="M37.6 10.4 C38.8 11.2 38.6 12.6 37.6 14 L25.6 27.6 L21.4 24.6 L34.2 11.4 C35.4 10.2 36.6 9.8 37.6 10.4 Z" fill="#fafafa" stroke="#555" stroke-width="1.3"/><path d="M21.2 24.4 C16.8 23.4 14.6 27.6 10.6 30.2 C15.6 35.2 24.6 33.4 25.4 27.6 Z" fill="#83beec" stroke="#2b88d8" stroke-width="1.3"/></svg>
<div id="t46" class="t" style="left:997.40px;top:85px;font-size:15px;line-height:17px;color:#444;font-weight:400;white-space:pre;letter-spacing:-0.268px;">Format as</div>
<div id="t47" class="t" style="left:1006.40px;top:105px;font-size:15px;line-height:17px;color:#444;font-weight:400;white-space:pre;letter-spacing:-0.532px;">Table</div>
<svg style="left:1043.9px;top:110.4px;" width="8.2" height="5.2" viewBox="0 0 8.2 5.2"><path d="M1 1 L4.1 4.2 L7.2 1" fill="none" stroke="#444" stroke-width="1.35" stroke-linecap="round" stroke-linejoin="round"/></svg>
<svg style="left:1075.5px;top:46px;" width="40" height="36" viewBox="0 0 40 36"><rect x="1.3" y="1.3" width="34.6" height="27.4" fill="#fafafa"/><rect x="7.6" y="7" width="22.4" height="15" fill="#83beec" stroke="#2b88d8" stroke-width="1.3"/><path d="M1.3 1.3 H35.9 V28.7 H1.3 Z M1.3 6.6 H35.9 M1.3 22.6 H35.9 M7.2 1.3 V28.7 M30.4 1.3 V28.7" fill="none" stroke="#555" stroke-width="1.3"/><path d="M37.6 10.4 C38.8 11.2 38.6 12.6 37.6 14 L25.6 27.6 L21.4 24.6 L34.2 11.4 C35.4 10.2 36.6 9.8 37.6 10.4 Z" fill="#fafafa" stroke="#555" stroke-width="1.3"/><path d="M21.2 24.4 C16.8 23.4 14.6 27.6 10.6 30.2 C15.6 35.2 24.6 33.4 25.4 27.6 Z" fill="#83beec" stroke="#2b88d8" stroke-width="1.3"/></svg>
<div id="t48" class="t" style="left:1081.90px;top:85px;font-size:15px;line-height:17px;color:#444;font-weight:400;white-space:pre;letter-spacing:-0.386px;">Cell</div>
<div id="t49" class="t" style="left:1068.00px;top:105px;font-size:15px;line-height:17px;color:#444;font-weight:400;white-space:pre;letter-spacing:-0.577px;">Styles</div>
<svg style="left:1110.1px;top:110.4px;" width="8.2" height="5.2" viewBox="0 0 8.2 5.2"><path d="M1 1 L4.1 4.2 L7.2 1" fill="none" stroke="#444" stroke-width="1.35" stroke-linecap="round" stroke-linejoin="round"/></svg>
<svg style="left:1145.2px;top:41px;" width="21.9" height="20" viewBox="0 0 23 20" preserveAspectRatio="none"><rect x="1.6" y="2" width="19.6" height="16.8" fill="#fbfbfb"/><rect x="10.6" y="6.6" width="10.6" height="7.6" fill="#69aee6"/><path d="M1.6 2 H21.2 V18.8 H1.6 Z M1.6 6.3 H21.2 M1.6 14.5 H21.2 M8 2 V6.3 M14.6 2 V18.8 M8 14.5 V18.8" fill="none" stroke="#484644" stroke-width="1.2"/><rect x="0.6" y="7" width="9.4" height="6.9" fill="#f3f2f1"/><path d="M10.6 6.4 H21.2 M10.6 14.4 H21.2" stroke="#2b88d8" stroke-width="1.2"/><path d="M11 10.4 H1.8 M5 7 L1.6 10.4 L5 13.8" fill="none" stroke="#2b88d8" stroke-width="1.5"/></svg>
<div id="t50" class="t" style="left:1169.40px;top:44px;font-size:15px;line-height:17px;color:#444;font-weight:400;white-space:pre;letter-spacing:-0.186px;">Insert</div>
<svg style="left:1217.3px;top:50.2px;" width="8.2" height="5.2" viewBox="0 0 8.2 5.2"><path d="M1 1 L4.1 4.2 L7.2 1" fill="none" stroke="#444" stroke-width="1.35" stroke-linecap="round" stroke-linejoin="round"/></svg>
<svg style="left:1145.2px;top:69px;" width="21.9" height="21" viewBox="0 0 23 21" preserveAspectRatio="none"><rect x="1.6" y="2.5" width="19.6" height="3.8" fill="#fbfbfb"/><rect x="1.6" y="15" width="19.6" height="3.8" fill="#fbfbfb"/><path d="M1.6 6.6 V2.4 H21.2 V6.6 M8 2.4 V6.6 M14.6 2.4 V6.6 M1.6 14.8 V19 H21.2 V14.8 M8 14.8 V19 M14.6 14.8 V19 M1.6 6.4 H5 M1.6 15 H5" fill="none" stroke="#484644" stroke-width="1.2"/><rect x="5" y="7.2" width="6.8" height="7" fill="#69aee6" stroke="#2b88d8" stroke-width="1.3"/><path d="M1.4 10.7 H5" stroke="#2b88d8" stroke-width="1.3"/><path d="M14 7.4 L20.6 14 M20.6 7.4 L14 14" stroke="#e8383d" stroke-width="1.5" fill="none"/></svg>
<div id="t51" class="t" style="left:1169.40px;top:72px;font-size:15px;line-height:17px;color:#444;font-weight:400;white-space:pre;letter-spacing:-0.360px;">Delete</div>
<svg style="left:1222.0px;top:77.9px;" width="8.2" height="5.2" viewBox="0 0 8.2 5.2"><path d="M1 1 L4.1 4.2 L7.2 1" fill="none" stroke="#444" stroke-width="1.35" stroke-linecap="round" stroke-linejoin="round"/></svg>
<svg style="left:1145.2px;top:96px;" width="21.9" height="22" viewBox="0 0 23 22" preserveAspectRatio="none"><path d="M5 2.6 H17 M5 0.8 V4.6 M17 0.8 V4.6" stroke="#2b88d8" stroke-width="1.3" fill="none"/><rect x="1.6" y="4.6" width="19.6" height="16.2" fill="#fbfbfb"/><rect x="6.6" y="8.8" width="9" height="7.8" fill="#69aee6"/><path d="M1.6 5.4 V20.8 H21.2 V5.4 M1.6 8.6 H21.2 M1.6 16.8 H21.2 M6.4 5.4 V20.8 M15.8 5.4 V20.8" fill="none" stroke="#484644" stroke-width="1.2"/><path d="M6.4 8.6 H15.8 V16.8 H6.4 Z" fill="none" stroke="#2b88d8" stroke-width="1.2"/></svg>
<div id="t52" class="t" style="left:1169.40px;top:99px;font-size:15px;line-height:17px;color:#444;font-weight:400;white-space:pre;letter-spacing:-0.119px;">Format</div>
<svg style="left:1220.4px;top:105.2px;" width="8.2" height="5.2" viewBox="0 0 8.2 5.2"><path d="M1 1 L4.1 4.2 L7.2 1" fill="none" stroke="#444" stroke-width="1.35" stroke-linecap="round" stroke-linejoin="round"/></svg>
<svg style="left:1262px;top:42px;" width="17" height="19" viewBox="0 0 17 19"><path d="M14.6 4.4 V1.2 H1.6 L8.6 9.2 L1.6 17.2 H14.8 V14" fill="none" stroke="#444" stroke-width="1.4" stroke-linejoin="miter"/></svg>
<svg style="left:1287.9px;top:49.9px;" width="8.2" height="5.2" viewBox="0 0 8.2 5.2"><path d="M1 1 L4.1 4.2 L7.2 1" fill="none" stroke="#444" stroke-width="1.35" stroke-linecap="round" stroke-linejoin="round"/></svg>
<svg style="left:1260px;top:70px;" width="22" height="19" viewBox="0 0 22 19"><path d="M1 1 H20.6 V17.6 H1 Z M1 4 H20.6" fill="#fafafa" stroke="#555" stroke-width="1.4"/><path d="M10.8 6 V14.4 M7.2 11 L10.8 14.6 L14.4 11" fill="none" stroke="#2b88d8" stroke-width="1.4"/></svg>
<svg style="left:1284.7px;top:77.9px;" width="8.2" height="5.2" viewBox="0 0 8.2 5.2"><path d="M1 1 L4.1 4.2 L7.2 1" fill="none" stroke="#444" stroke-width="1.35" stroke-linecap="round" stroke-linejoin="round"/></svg>
<svg style="left:1260px;top:97px;" width="21" height="21" viewBox="0 0 21 21"><path d="M10.6 1.2 L19 8 L8.6 19 L1.4 12.2 Z" fill="#fafafa" stroke="#a33db5" stroke-width="1.5" stroke-linejoin="round"/><path d="M5.2 8.6 L12.4 15 L8.6 19 L1.4 12.2 Z" fill="#d9a3e3" stroke="#a33db5" stroke-width="1.5" stroke-linejoin="round"/></svg>
<svg style="left:1284.7px;top:105.4px;" width="8.2" height="5.2" viewBox="0 0 8.2 5.2"><path d="M1 1 L4.1 4.2 L7.2 1" fill="none" stroke="#444" stroke-width="1.35" stroke-linecap="round" stroke-linejoin="round"/></svg>
<div id="t53" class="t" style="left:1310.90px;top:41px;font-size:20px;line-height:22px;color:#2b88d8;font-weight:400;white-space:pre;letter-spacing:0.556px;">A</div>
<div id="t54" class="t" style="left:1310.94px;top:59px;font-size:19px;line-height:21px;color:#444;font-weight:400;white-space:pre;letter-spacing:1.611px;">Z</div>
<svg style="left:1326px;top:52px;" width="22" height="21" viewBox="0 0 22 21"><path d="M1 1.2 H20.6 V3 L12.8 10.6 V19.4 H8.8 V10.6 L1 3 Z" fill="#fafafa" stroke="#444" stroke-width="1.3" stroke-linejoin="round"/></svg>
<div id="t55" class="t" style="left:1307.20px;top:85px;font-size:15px;line-height:17px;color:#444;font-weight:400;white-space:pre;letter-spacing:0.251px;">Sort &amp;</div>
<div id="t56" class="t" style="left:1306.10px;top:105px;font-size:15px;line-height:17px;color:#444;font-weight:400;white-space:pre;letter-spacing:-0.357px;">Filter</div>
<svg style="left:1341.9px;top:110.4px;" width="8.2" height="5.2" viewBox="0 0 8.2 5.2"><path d="M1 1 L4.1 4.2 L7.2 1" fill="none" stroke="#444" stroke-width="1.35" stroke-linecap="round" stroke-linejoin="round"/></svg>
<svg style="left:1364px;top:43px;" width="39" height="38" viewBox="0 0 39 38"><circle cx="24" cy="13.6" r="12.4" fill="#fafafa" stroke="#444" stroke-width="1.4"/><path d="M15.4 22.6 L1.4 36.4" stroke="#444" stroke-width="1.5" fill="none"/></svg>
<div id="t57" class="t" style="left:1361.10px;top:85px;font-size:15px;line-height:17px;color:#444;font-weight:400;white-space:pre;letter-spacing:0.114px;">Find &amp;</div>
<div id="t58" class="t" style="left:1356.90px;top:105px;font-size:15px;line-height:17px;color:#444;font-weight:400;white-space:pre;letter-spacing:-0.451px;">Select</div>
<svg style="left:1399.9px;top:110.4px;" width="8.2" height="5.2" viewBox="0 0 8.2 5.2"><path d="M1 1 L4.1 4.2 L7.2 1" fill="none" stroke="#444" stroke-width="1.35" stroke-linecap="round" stroke-linejoin="round"/></svg>
<svg style="left:1444px;top:43px;" width="28" height="36" viewBox="0 0 28 36"><path d="M13.4 1.4 H24.6 L16.6 16.6 H26.6 L6.8 34.6 H3 L10.6 19.8 H1.4 Z" fill="#83beec" stroke="#2b88d8" stroke-width="1.5" stroke-linejoin="round"/></svg>
<div id="t59" class="t" style="left:1440.80px;top:85px;font-size:15px;line-height:17px;color:#444;font-weight:400;white-space:pre;letter-spacing:-0.481px;">Ideas</div>
<div style="left:768px;top:403px;width:832px;height:699px;background:#fff;"></div>
<div style="left:769px;top:485px;width:830px;height:40px;background:#f5f6f7;"></div>
<div style="left:769px;top:525px;width:830px;height:1px;background:#eaebec;"></div>
<div style="left:769px;top:872px;width:830px;height:229px;background:#f0f0f0;"></div>
<div style="left:960px;top:526px;width:1px;height:346px;background:#f0f0f0;"></div>
<svg style="left:773px;top:408px;" width="21.0" height="19.0" viewBox="0 0 21 19"><rect x="5.6" y="0" width="15.4" height="19" rx="1" fill="#21a366"/><rect x="5.6" y="0" width="7.7" height="4.8" fill="#21a366"/><rect x="13.3" y="0" width="7.7" height="4.8" fill="#33c481"/><rect x="5.6" y="4.8" width="7.7" height="4.8" fill="#107c41"/><rect x="13.3" y="4.8" width="7.7" height="4.8" fill="#21a366"/><rect x="5.6" y="9.6" width="7.7" height="4.8" fill="#185c37"/><rect x="13.3" y="9.6" width="7.7" height="4.8" fill="#107c41"/><rect x="5.6" y="14.4" width="15.4" height="4.6" fill="#185c37"/><rect x="0" y="3.6" width="11.6" height="11.8" rx="1" fill="#107c41"/><path d="M3.2 6.2 L8.4 12.8 M8.4 6.2 L3.2 12.8" stroke="#fff" stroke-width="1.7" fill="none"/></svg>
<div id="t60" class="t" style="left:797.20px;top:410px;font-size:15px;line-height:17px;color:#000;font-weight:400;white-space:pre;letter-spacing:-0.478px;">Save As</div>
<svg style="left:1574px;top:412px;" width="14" height="13" viewBox="0 0 14 13"><path d="M0.8 0.6 L12.8 12.4 M12.8 0.6 L0.8 12.4" stroke="#222" stroke-width="1.2" fill="none"/></svg>
<svg style="left:780px;top:453.5px;" width="17" height="15" viewBox="0 0 17 15"><path d="M16 7.5 H1.6 M7.6 1.4 L1.4 7.5 L7.6 13.6" fill="none" stroke="#777" stroke-width="2"/></svg>
<svg style="left:817.5px;top:453.5px;" width="17" height="15" viewBox="0 0 17 15"><path d="M1 7.5 H15.4 M9.4 1.4 L15.6 7.5 L9.4 13.6" fill="none" stroke="#cfcfcf" stroke-width="2"/></svg>
<svg style="left:850px;top:458px;" width="9" height="6" viewBox="0 0 9 6"><path d="M0.8 0.8 L4.4 4.4 L8 0.8" fill="none" stroke="#777" stroke-width="1.9"/></svg>
<svg style="left:872px;top:453.5px;" width="14" height="17" viewBox="0 0 14 17"><path d="M7 16 V1.6 M1.2 7.6 L7 1.6 L12.8 7.6" fill="none" stroke="#777" stroke-width="1.8"/></svg>
<div style="left:895px;top:441px;width:435px;height:39px;background:#fff;border:1px solid #d9d9d9;"></div>
<svg style="left:899px;top:451px;" width="17" height="17" viewBox="0 0 17 17"><path d="M5.2 0.6 H11.4 V7.4 H16 L8.3 16.2 L0.6 7.4 H5.2 Z" fill="#3b94e4"/></svg>
<svg style="left:925px;top:455.5px;" width="8" height="11" viewBox="0 0 8 11"><path d="M1.6 1 L6.2 5.5 L1.6 10" fill="none" stroke="#777" stroke-width="2.2"/></svg>
<div id="t61" class="t" style="left:942.40px;top:452px;font-size:15px;line-height:17px;color:#1a1a1a;font-weight:400;white-space:pre;letter-spacing:-0.821px;">This PC</div>
<svg style="left:1000px;top:455.5px;" width="8" height="11" viewBox="0 0 8 11"><path d="M1.6 1 L6.2 5.5 L1.6 10" fill="none" stroke="#777" stroke-width="2.2"/></svg>
<div id="t62" class="t" style="left:1016.90px;top:452px;font-size:15px;line-height:17px;color:#1a1a1a;font-weight:400;white-space:pre;letter-spacing:0.053px;">Downloads</div>
<svg style="left:1262px;top:457px;" width="13" height="9" viewBox="0 0 13 9"><path d="M1.4 1.2 L6.3 6.4 L11.2 1.2" fill="none" stroke="#6e6e6e" stroke-width="2"/></svg>
<div style="left:1288px;top:442px;width:1px;height:37px;background:#d9d9d9;"></div>
<svg style="left:0px;top:0px;" width="1600" height="600" viewBox="0 0 1600 600"><path d="M1312.81 456.31 A5.7 5.7 0 1 1 1304.47 457.78" fill="none" stroke="#6e6e6e" stroke-width="1.9"/><path d="M1303 454.9 H1308.2 V459.4" fill="none" stroke="#6e6e6e" stroke-width="1.8"/></svg>
<div style="left:1340px;top:441px;width:251px;height:39px;background:#fff;border:1px solid #d9d9d9;"></div>
<svg style="left:1356px;top:450px;" width="20" height="20" viewBox="0 0 20 20"><circle cx="12" cy="7.5" r="4.9" fill="none" stroke="#85858f" stroke-width="1.2"/><path d="M8.6 11.1 L2.3 17" stroke="#85858f" stroke-width="1.3"/></svg>
<div id="t63" class="t" style="left:1390.20px;top:452px;font-size:15px;line-height:17px;color:#6d6d6d;font-weight:400;white-space:pre;letter-spacing:-0.282px;">Search Downloads</div>
<div id="t64" class="t" style="left:787.40px;top:497px;font-size:15px;line-height:17px;color:#1e395b;font-weight:400;white-space:pre;letter-spacing:-0.209px;">Organize</div>
<svg style="left:852px;top:502px;" width="8" height="5" viewBox="0 0 8 5"><path d="M0.4 0.6 H7.2 L3.8 4.2 Z" fill="#1e395b"/></svg>
<div id="t65" class="t" style="left:896.90px;top:497px;font-size:15px;line-height:17px;color:#1e395b;font-weight:400;white-space:pre;">New folder</div>
<svg style="left:1489px;top:495px;" width="19" height="19" viewBox="0 0 19 19"><rect x="0.5" y="0.5" width="18" height="18" rx="0.8" fill="#d4d4d4" stroke="#c4c4c4" stroke-width="1"/><rect x="1.4" y="1.4" width="4.9" height="4.9" fill="#fff"/><rect x="2.3" y="2.4" width="3.2" height="1.6" fill="#7db4f0"/><rect x="2.3" y="3.9" width="3.2" height="1.4" fill="#3d7a4a"/><rect x="7.3" y="1.4" width="4.9" height="4.9" fill="#fff"/><rect x="8.2" y="2.4" width="3.2" height="1.6" fill="#8ab0e8"/><rect x="8.2" y="3.9" width="3.2" height="1.4" fill="#8a9a40"/><rect x="13.2" y="1.4" width="4.9" height="4.9" fill="#fff"/><rect x="14.1" y="2.4" width="3.2" height="1.6" fill="#e23a2a"/><rect x="14.1" y="3.9" width="3.2" height="1.4" fill="#7a3030"/><rect x="1.4" y="7.3" width="4.9" height="4.9" fill="#fff"/><rect x="2.3" y="8.3" width="3.2" height="1.6" fill="#d9a030"/><rect x="2.3" y="9.8" width="3.2" height="1.4" fill="#b03030"/><rect x="7.3" y="7.3" width="4.9" height="4.9" fill="#fff"/><rect x="8.2" y="8.3" width="3.2" height="1.6" fill="#8ec0f2"/><rect x="8.2" y="9.8" width="3.2" height="1.4" fill="#3d7a4a"/><rect x="13.2" y="7.3" width="4.9" height="4.9" fill="#fff"/><rect x="14.1" y="8.3" width="3.2" height="1.6" fill="#a0b8e0"/><rect x="14.1" y="9.8" width="3.2" height="1.4" fill="#b0a030"/><rect x="1.4" y="13.2" width="4.9" height="4.9" fill="#fff"/><rect x="2.3" y="14.2" width="3.2" height="1.6" fill="#9cc4f0"/><rect x="2.3" y="15.7" width="3.2" height="1.4" fill="#4a7a5a"/><rect x="7.3" y="13.2" width="4.9" height="4.9" fill="#fff"/><rect x="8.2" y="14.2" width="3.2" height="1.6" fill="#c8a030"/><rect x="8.2" y="15.7" width="3.2" height="1.4" fill="#5060c0"/><rect x="13.2" y="13.2" width="4.9" height="4.9" fill="#fff"/><rect x="14.1" y="14.2" width="3.2" height="1.6" fill="#e23a2a"/><rect x="14.1" y="15.7" width="3.2" height="1.4" fill="#903030"/></svg>
<svg style="left:1519.6px;top:502.2px;" width="8" height="5" viewBox="0 0 8 5"><path d="M0.2 0.3 H6.8 L3.5 4 Z" fill="#1e2a4a"/></svg>
<svg style="left:1562px;top:494.5px;" width="20" height="20" viewBox="0 0 20 20"><circle cx="10" cy="10" r="9" fill="#0b63be"/><path d="M7.2 7.4 C7.2 3.6 12.9 3.6 12.9 7.2 C12.9 9.6 10 9.6 10 12.6" fill="none" stroke="#fff" stroke-width="1.5"/><circle cx="10" cy="15.2" r="1" fill="#fff"/></svg>
<div style="left:769px;top:546px;width:189px;height:29px;background:#d9d9d9;"></div>
<svg style="left:794px;top:552px;" width="21" height="18" viewBox="0 0 21 18"><path d="M1 7.4 L7 6 M2.2 10.6 L7 9.6 M1.4 13.8 L6.4 12.4" stroke="#9fd2f6" stroke-width="1.2"/><g transform="rotate(14 12 9.5)"><path d="M12 1.2 L14.5 6.9 L20.4 7.4 L15.9 11.4 L17.3 17.4 L12 14.2 L6.7 17.4 L8.1 11.4 L3.6 7.4 L9.5 6.9 Z" fill="#29a3f5"/></g></svg>
<div id="t66" class="t" style="left:818.40px;top:552px;font-size:15px;line-height:17px;color:#1a1a1a;font-weight:400;white-space:pre;letter-spacing:-0.600px;">Quick access</div>
<svg style="left:794px;top:591px;" width="20.2" height="18.2" viewBox="0 0 21 19"><rect x="5.6" y="0" width="15.4" height="19" rx="1" fill="#21a366"/><rect x="5.6" y="0" width="7.7" height="4.8" fill="#21a366"/><rect x="13.3" y="0" width="7.7" height="4.8" fill="#33c481"/><rect x="5.6" y="4.8" width="7.7" height="4.8" fill="#107c41"/><rect x="13.3" y="4.8" width="7.7" height="4.8" fill="#21a366"/><rect x="5.6" y="9.6" width="7.7" height="4.8" fill="#185c37"/><rect x="13.3" y="9.6" width="7.7" height="4.8" fill="#107c41"/><rect x="5.6" y="14.4" width="15.4" height="4.6" fill="#185c37"/><rect x="0" y="3.6" width="11.6" height="11.8" rx="1" fill="#107c41"/><path d="M3.2 6.2 L8.4 12.8 M8.4 6.2 L3.2 12.8" stroke="#fff" stroke-width="1.7" fill="none"/></svg>
<div id="t67" class="t" style="left:818.40px;top:592px;font-size:15px;line-height:17px;color:#1a1a1a;font-weight:400;white-space:pre;letter-spacing:-0.247px;">Microsoft Excel</div>
<svg style="left:794px;top:633px;" width="21" height="14" viewBox="0 0 21 14"><path d="M5 13.4 A4.2 4.2 0 0 1 4.6 5 A6 6 0 0 1 15.6 4.4 A4.6 4.6 0 0 1 16.4 13.4 Z" fill="#1b80d4"/><path d="M4.6 5 A6 6 0 0 1 15.6 4.4 L9 8.6 Z" fill="#0f64b4"/><path d="M3 9.6 L9 8.6 L19.8 11 A4.4 4.4 0 0 1 16.4 13.4 H5 A4.2 4.2 0 0 1 3 9.6 Z" fill="#2ca0ea"/></svg>
<div id="t68" class="t" style="left:818.40px;top:631px;font-size:15px;line-height:17px;color:#1a1a1a;font-weight:400;white-space:pre;letter-spacing:-0.295px;">OneDrive</div>
<svg style="left:794.5px;top:671px;" width="20" height="18" viewBox="0 0 20 18"><path d="M6.6 1 L18.8 3.4 V12.8 L6.6 10.4 Z" fill="#3fb0f5" stroke="#8a9aa6" stroke-width="0.8"/><path d="M8 2.6 L17.6 4.6 V11.2 L8 9.2 Z" fill="#62c3fa"/><path d="M1 14.6 L8.4 11.6 L15.4 13.2 L8 16.6 Z" fill="#e4e6e8" stroke="#b9bec3" stroke-width="0.7"/><path d="M10.4 11 L12.6 13" stroke="#9aa3ab" stroke-width="1.4"/></svg>
<div id="t69" class="t" style="left:818.40px;top:671px;font-size:15px;line-height:17px;color:#1a1a1a;font-weight:400;white-space:pre;letter-spacing:-0.963px;">This PC</div>
<svg style="left:795px;top:710px;" width="19" height="18" viewBox="0 0 19 18"><circle cx="11.4" cy="6.6" r="6.2" fill="#4f9cc8"/><path d="M8 2.2 C10 0.8 13 0.8 15 2 C14 4 11 4.6 8.6 4 Z M13 7 C15 6.4 17 7.4 17.4 8.6 C16.6 10.6 15 12 13.4 12.4 C12.4 10.6 12.2 8.6 13 7 Z" fill="#a9d6ee"/><path d="M6 4 C8 1.4 12 0.6 15 2 M7 9.6 C10 10.6 14 9.6 17 7.2 M11.4 0.6 C9 3.6 9 9.6 11.4 12.6" fill="none" stroke="#d6eefb" stroke-width="0.9"/><path d="M0.8 6.4 L10.8 7.8 V15.4 L0.8 14 Z" fill="#33a7ef" stroke="#6c8799" stroke-width="0.7"/><path d="M2 7.8 L9.8 8.8 V14.2 L2 13.2 Z" fill="#58bdf7"/><path d="M4.2 16 L9.2 16.8 L10 17.6 H3.4 Z" fill="#9aa3ab"/></svg>
<div id="t70" class="t" style="left:818.40px;top:710px;font-size:15px;line-height:17px;color:#1a1a1a;font-weight:400;white-space:pre;letter-spacing:0.026px;">Network</div>
<div id="t71" class="t" style="left:1187.80px;top:547px;font-size:15px;line-height:17px;color:#6d6d6d;font-weight:400;white-space:pre;letter-spacing:-0.145px;">No items match your search.</div>
<div id="t72" class="t" style="left:847.90px;top:893px;font-size:15px;line-height:17px;color:#1a1a1a;font-weight:400;white-space:pre;letter-spacing:-0.453px;">File name:</div>
<div style="left:920px;top:887px;width:674px;height:28px;background:#fff;border:1px solid #3d97e3;"></div>
<div id="t73" class="t" style="left:926.10px;top:893px;font-size:15px;line-height:17px;color:#000;font-weight:400;white-space:pre;letter-spacing:-0.208px;">Xóa sản phẩm hàng loạt.xlsx</div>
<div style="left:1113.5px;top:892px;width:1px;height:19px;background:#000;"></div>
<div id="t74" class="t" style="left:827.60px;top:923px;font-size:15px;line-height:17px;color:#1a1a1a;font-weight:400;white-space:pre;letter-spacing:-0.392px;">Save as type:</div>
<div style="left:920px;top:917px;width:674px;height:27px;background:#e1e1e1;border:1px solid #bdbdbd;"></div>
<div id="t75" class="t" style="left:922.70px;top:923px;font-size:15px;line-height:17px;color:#1a1a1a;font-weight:400;white-space:pre;letter-spacing:-0.179px;">Excel Workbook</div>
<svg style="left:1577.5px;top:898.5px;" width="11" height="7" viewBox="0 0 11 7"><path d="M0.8 0.8 L5.3 5.3 L9.8 0.8" fill="none" stroke="#444" stroke-width="1.1"/></svg>
<svg style="left:1577.5px;top:928px;" width="11" height="7" viewBox="0 0 11 7"><path d="M0.8 0.8 L5.3 5.3 L9.8 0.8" fill="none" stroke="#444" stroke-width="1.1"/></svg>
<div id="t76" class="t" style="left:859.90px;top:956px;font-size:15px;line-height:17px;color:#6d6d6d;font-weight:400;white-space:pre;letter-spacing:0.053px;">Authors:</div>
<div id="t77" class="t" style="left:1193.40px;top:956px;font-size:15px;line-height:17px;color:#6d6d6d;font-weight:400;white-space:pre;letter-spacing:-0.532px;">Tags:</div>
<div id="t78" class="t" style="left:1239.80px;top:956px;font-size:15px;line-height:17px;color:#1f6fd6;font-weight:400;white-space:pre;letter-spacing:0.198px;">Add a tag</div>
<div style="left:951px;top:1005px;width:17px;height:17px;background:#fff;border:1px solid #333;"></div>
<div id="t79" class="t" style="left:971.40px;top:1003px;font-size:15px;line-height:17px;color:#1f6fd6;font-weight:400;white-space:pre;letter-spacing:-0.323px;">Save Thumbnail</div>
<svg style="left:777px;top:1072.5px;" width="12" height="8" viewBox="0 0 12 8"><path d="M1.2 6.6 L5.8 2 L10.4 6.6" fill="none" stroke="#333" stroke-width="2"/></svg>
<div id="t80" class="t" style="left:795.60px;top:1068px;font-size:15px;line-height:17px;color:#1a1a1a;font-weight:400;white-space:pre;letter-spacing:-0.171px;">Hide Folders</div>
<div id="t81" class="t" style="left:1266.00px;top:1066px;font-size:15px;line-height:17px;color:#1a1a1a;font-weight:400;white-space:pre;letter-spacing:-0.086px;">Tools</div>
<svg style="left:1317px;top:1070.5px;" width="9" height="6" viewBox="0 0 9 6"><path d="M0.4 0.6 H8.4 L4.4 5 Z" fill="#111"/></svg>
<div style="left:1347px;top:1058px;width:108px;height:31px;background:#e1e1e1;border:2px solid #0078d7;"></div>
<div id="t82" class="t" style="left:1384.60px;top:1066px;font-size:15px;line-height:17px;color:#1a1a1a;font-weight:400;white-space:pre;letter-spacing:-0.626px;">Save</div>
<div style="left:1471px;top:1058px;width:108px;height:31px;background:#e1e1e1;border:1px solid #adadad;"></div>
<div id="t83" class="t" style="left:1502.80px;top:1066px;font-size:15px;line-height:17px;color:#1a1a1a;font-weight:400;white-space:pre;letter-spacing:-0.584px;">Cancel</div>
<div style="left:1596px;top:1090px;width:2px;height:2px;background:#bdbdbd;"></div>
<div style="left:1596px;top:1093px;width:2px;height:2px;background:#bdbdbd;"></div>
<div style="left:1596px;top:1096px;width:2px;height:2px;background:#bdbdbd;"></div>
<div style="left:1593px;top:1093px;width:2px;height:2px;background:#bdbdbd;"></div>
<div style="left:1593px;top:1096px;width:2px;height:2px;background:#bdbdbd;"></div>
<div style="left:1590px;top:1096px;width:2px;height:2px;background:#bdbdbd;"></div>
<div style="left:768px;top:403px;width:832px;height:1px;background:#3c3c3c;"></div>
<div style="left:768px;top:403px;width:1px;height:699px;background:#3c3c3c;"></div>
<div style="left:1599px;top:403px;width:1px;height:699px;background:#3c3c3c;"></div>
<svg style="left:768px;top:1099px;" width="832" height="3" viewBox="0 0 832 3"><rect x="0" y="1.4" width="832" height="1.6" fill="#2e2e2e"/></svg>
<svg style="left:0px;top:0px;" width="1600" height="1102" viewBox="0 0 1600 1102"><rect x="916.2" y="882.1" width="205.6" height="37.8" fill="none" stroke="#ea1b2a" stroke-width="2.4"/><rect x="1337.3" y="1050.2" width="128.6" height="45.4" fill="none" stroke="#ea1b2a" stroke-width="2.4"/></svg>
</body></html>
